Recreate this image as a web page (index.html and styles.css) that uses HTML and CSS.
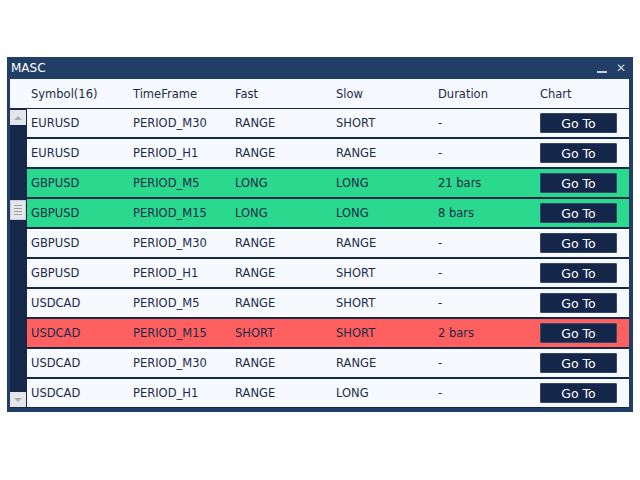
FILE: index.html
```html
<!DOCTYPE html>
<html lang="en">
<head>
    <meta charset="UTF-8">
    <title>MASC</title>
    <link rel="stylesheet" href="styles.css">
</head>
<body>
    <div class="window">
        <div class="titlebar">
            <span class="title">MASC</span>
            <span class="controls"><span class="min"></span><span class="close">&#x2715;</span></span>
        </div>
        <div class="header">
            <span>Symbol(16)</span>
            <span>TimeFrame</span>
            <span>Fast</span>
            <span>Slow</span>
            <span>Duration</span>
            <span>Chart</span>
        </div>
        <div class="body">
            <div class="scrollbar">
                <div class="sb-btn"><span class="arrow-up"></span></div>
                <div class="sb-thumb"><span></span><span></span><span></span><span></span></div>
                <div class="sb-btn"><span class="arrow-down"></span></div>
            </div>
            <div class="rows" id="rows"></div>
        </div>
    </div>
    <script>
        const data = [
            ['EURUSD', 'PERIOD_M30', 'RANGE', 'SHORT', '-', ''],
            ['EURUSD', 'PERIOD_H1', 'RANGE', 'RANGE', '-', ''],
            ['GBPUSD', 'PERIOD_M5', 'LONG', 'LONG', '21 bars', 'long'],
            ['GBPUSD', 'PERIOD_M15', 'LONG', 'LONG', '8 bars', 'long'],
            ['GBPUSD', 'PERIOD_M30', 'RANGE', 'RANGE', '-', ''],
            ['GBPUSD', 'PERIOD_H1', 'RANGE', 'SHORT', '-', ''],
            ['USDCAD', 'PERIOD_M5', 'RANGE', 'SHORT', '-', ''],
            ['USDCAD', 'PERIOD_M15', 'SHORT', 'SHORT', '2 bars', 'short'],
            ['USDCAD', 'PERIOD_M30', 'RANGE', 'RANGE', '-', ''],
            ['USDCAD', 'PERIOD_H1', 'RANGE', 'LONG', '-', '']
        ];

        const rows = document.getElementById('rows');
        data.forEach(item => {
            const row = document.createElement('div');
            row.classList.add('row');
            if (item[5]) row.classList.add(item[5]);
            row.innerHTML = `
                <span>${item[0]}</span>
                <span>${item[1]}</span>
                <span>${item[2]}</span>
                <span>${item[3]}</span>
                <span>${item[4]}</span>
                <span><button class="goto">Go To</button></span>
            `;
            rows.appendChild(row);
        });
    </script>
</body>
</html>
```

FILE: styles.css
```css
body {
    margin: 0;
    background-color: #ffffff;
    font-family: "DejaVu Sans", Verdana, sans-serif;
    font-size: 11.5px;
}
.window {
    margin: 57px 0 0 7px;
    width: 626px;
    height: 355px;
    box-sizing: border-box;
    padding: 0 4px 4px 3px;
    background-color: #213f66;
}
.titlebar {
    height: 22px;
    display: flex;
    align-items: center;
    justify-content: space-between;
    color: #ffffff;
    font-size: 12px;
    padding-left: 1px;
}
.controls {
    display: flex;
    align-items: center;
    gap: 9px;
    margin-right: 3px;
}
.min {
    display: block;
    width: 10px;
    height: 2px;
    margin-top: 7px;
    background-color: #c8ced8;
}
.close {
    color: #c8ced8;
    font-size: 12px;
    font-weight: bold;
}
.header {
    height: 29px;
    background-color: #f6f9fd;
    display: grid;
    grid-template-columns: 102px 102px 101px 102px 102px 1fr;
    align-items: center;
    padding-left: 21px;
    color: #1c2b4b;
}
.body {
    display: flex;
    height: 300px;
    background-color: #16284a;
}
.scrollbar {
    width: 16px;
    margin-right: 1px;
    display: flex;
    flex-direction: column;
    justify-content: space-between;
    position: relative;
    padding: 2px 0 1px;
}
.sb-btn {
    height: 15px;
    background-color: #e4e6ea;
    display: flex;
    align-items: center;
    justify-content: center;
}
.arrow-up {
    border-left: 4px solid transparent;
    border-right: 4px solid transparent;
    border-bottom: 4px solid #a9adb4;
}
.arrow-down {
    border-left: 4px solid transparent;
    border-right: 4px solid transparent;
    border-top: 4px solid #a9adb4;
}
.sb-thumb {
    position: absolute;
    left: 0;
    top: 92px;
    width: 16px;
    height: 20px;
    box-sizing: border-box;
    background-color: #e4e6ea;
    border: 1px solid #c9ccd2;
    display: flex;
    flex-direction: column;
    justify-content: center;
    align-items: center;
    gap: 2px;
}
.sb-thumb span {
    display: block;
    width: 8px;
    height: 1px;
    background-color: #9aa0a8;
}
.rows {
    flex: 1;
    display: flex;
    flex-direction: column;
}
.row {
    height: 28px;
    margin: 1px 0;
    background-color: #f6f9fd;
    display: grid;
    grid-template-columns: 102px 102px 101px 102px 102px 1fr;
    align-items: center;
    padding-left: 4px;
    color: #1c2b4b;
}
.row.long {
    background-color: #2ad98d;
}
.row.short {
    background-color: #fe5f5f;
}
.goto {
    width: 77px;
    height: 20px;
    padding: 0;
    background-color: #14264a;
    color: #ffffff;
    border: 1px solid #3a4a66;
    border-radius: 1px;
    font-family: "DejaVu Sans", Verdana, sans-serif;
    font-size: 12.5px;
    cursor: pointer;
}
```
